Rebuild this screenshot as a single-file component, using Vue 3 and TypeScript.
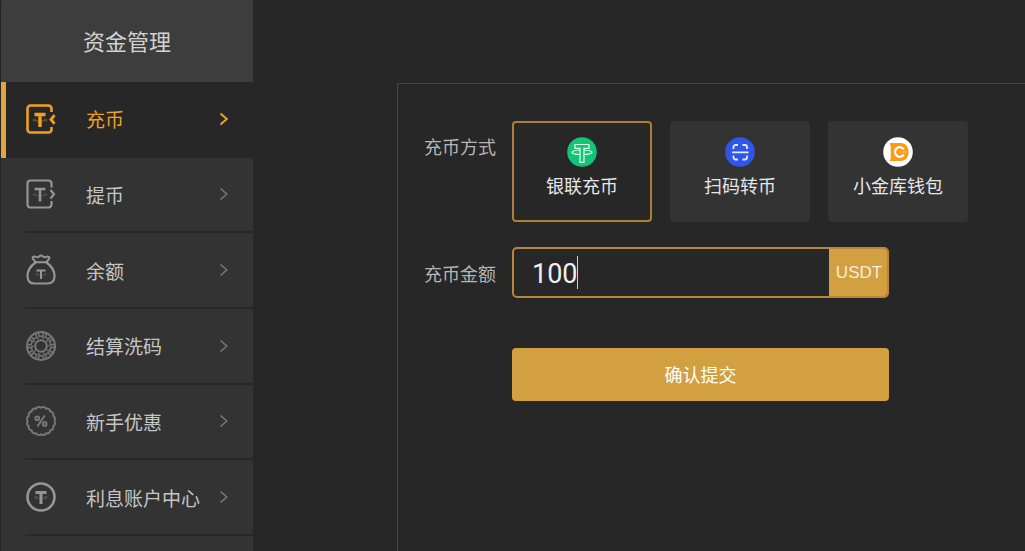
<script setup lang="ts">
import { ref } from 'vue'

type IconName = 'deposit' | 'withdraw' | 'balance' | 'chip' | 'offer' | 'interest'

interface MenuItem {
  icon: IconName
  label: string
}

const menu: MenuItem[] = [
  { icon: 'deposit', label: '充币' },
  { icon: 'withdraw', label: '提币' },
  { icon: 'balance', label: '余额' },
  { icon: 'chip', label: '结算洗码' },
  { icon: 'offer', label: '新手优惠' },
  { icon: 'interest', label: '利息账户中心' },
]

const methods = [
  { id: 'union', label: '银联充币' },
  { id: 'scan', label: '扫码转币' },
  { id: 'wallet', label: '小金库钱包' },
]

const activeMenu = ref<IconName>('deposit')
const method = ref('union')
const amount = ref('100')

// Scalloped outline of the discount badge: small outward arcs on a circle.
const scallops = 16
const badgePath = Array.from({ length: scallops + 1 }, (_, i) => {
  const a = (i / scallops) * Math.PI * 2
  const x = (16 + 13.3 * Math.cos(a)).toFixed(2)
  const y = (16 + 13.3 * Math.sin(a)).toFixed(2)
  return i === 0 ? `M${x} ${y}` : `A3.4 3.4 0 0 1 ${x} ${y}`
}).join('')

const chipAngles = Array.from({ length: 10 }, (_, i) => i * 36)
</script>

<template>
  <div class="page">
    <aside class="sidebar">
      <h1 class="title">资金管理</h1>
      <nav class="menu">
        <a
          v-for="item in menu"
          :key="item.icon"
          href="#"
          class="item"
          :class="[item.icon, { active: item.icon === activeMenu }]"
          @click.prevent="activeMenu = item.icon"
        >
          <span class="row">
            <svg class="icon" viewBox="0 0 32 32" fill="none" stroke="currentColor" stroke-width="2" aria-hidden="true">
              <g v-if="item.icon === 'deposit'">
                <path d="M26.500 9V5.500a3 3 0 0 0-3-3H5.500a3 3 0 0 0-3 3v21a3 3 0 0 0 3 3h18a3 3 0 0 0 3-3V24" stroke-width="2.600" />
                <path d="M29.500 12.200L26 16.500l3.500 4.300" stroke-width="2.800" />
                <path d="M9.500 11.500h11M15 11.500V24" stroke-width="3.400" />
                <path d="M11 16c-4.500.8-4.500 2 4 2s8.500-1.200 4-2" stroke-width="0.800" stroke-opacity="0.550" />
              </g>
              <g v-else-if="item.icon === 'withdraw'">
                <path d="M26.500 9.500V5.500a3 3 0 0 0-3-3H5.500a3 3 0 0 0-3 3v21a3 3 0 0 0 3 3h18a3 3 0 0 0 3-3V23" stroke-width="2.200" />
                <path d="M25.500 12l3.500 4.300-3.500 4.300" stroke-width="2.200" />
                <path d="M9.500 11h11M15 11v12.500" stroke-width="2.600" />
                <path d="M11 15.500c-4.500.8-4.500 2 4 2s8.500-1.200 4-2" stroke-width="0.700" stroke-opacity="0.500" />
              </g>
              <g v-else-if="item.icon === 'balance'">
                <path d="M10.500 8.200L7.800 4.600c-.9-1.600 1-2.600 3-1.700 1.500.6 2.600.2 3.600-.7 1-.8 2.200-.8 3.200 0s2.100 1.300 3.600.7c2-.9 3.900.1 3 1.700l-2.700 3.600z" />
                <path d="M10.500 8.500C5.500 12 2.500 16.500 2.500 22c0 5 2.500 7.500 7 7.500h13c4.500 0 7-2.500 7-7.500 0-5.500-3-10-8-13.500" stroke-width="2.200" />
                <path d="M11.500 16.500h9M16 16.500V25" />
                <path d="M13 19.500c-4 .6-3 1.600 3 1.600s7-1 3-1.600" stroke-width="0.600" stroke-opacity="0.500" />
              </g>
              <g v-else-if="item.icon === 'chip'">
                <circle cx="16" cy="16" r="14" stroke-width="2" />
                <circle cx="16" cy="16" r="5.800" stroke-width="2" />
                <path
                  v-for="angle in chipAngles"
                  :key="angle"
                  :transform="`rotate(${angle} 16 16)`"
                  d="M13.300 2.500l.8 3.800h3.800l.8-3.800M12.500 7.300l1 1.700"
                  stroke-width="1.500"
                />
              </g>
              <g v-else-if="item.icon === 'offer'">
                <path :d="badgePath" stroke-width="2" />
                <path d="M19.800 10.500l-7.400 11" stroke-width="2" />
                <circle cx="12.300" cy="13.300" r="1.900" stroke-width="2" />
                <circle cx="19.700" cy="18.900" r="1.900" stroke-width="2" />
              </g>
              <g v-else>
                <circle cx="16" cy="16" r="13.500" stroke-width="2.600" />
                <path d="M10.500 11.500h11M16 11.500V23" stroke-width="3" />
                <path d="M12.500 15.500c-4.500.8-3.500 2 3.500 2s8-1.200 3.500-2" stroke-width="0.800" stroke-opacity="0.600" />
              </g>
            </svg>
            <span class="label">{{ item.label }}</span>
            <svg class="arrow" viewBox="0 0 10 14" fill="none" stroke="currentColor" aria-hidden="true">
              <path d="M1.500 1.500L7.800 7l-6.300 5.500" />
            </svg>
          </span>
        </a>
      </nav>
    </aside>

    <main class="content">
      <form class="panel" @submit.prevent>
        <div class="field">
          <span id="method-label" class="caption top">充币方式</span>
          <div class="methods" role="group" aria-labelledby="method-label">
            <button
              v-for="m in methods"
              :key="m.id"
              type="button"
              class="method"
              :class="{ selected: m.id === method }"
              :aria-pressed="m.id === method"
              @click="method = m.id"
            >
              <svg class="logo" viewBox="0 0 30 30" fill="none" aria-hidden="true">
                <g v-if="m.id === 'union'">
                  <circle cx="15" cy="15" r="14.800" fill="#13c476" />
                  <path d="M8 7.500h14v3.800h-5v14h-4v-14H8z" stroke="#dcfff0" stroke-width="1.200" />
                  <path d="M12.800 13c-4.800.3-7.800 1.200-7.800 2.300s4 2.200 8 2.200M17.200 13c4.800.3 7.800 1.200 7.800 2.300s-4 2.200-8 2.200" stroke="#dcfff0" stroke-width="1.200" />
                </g>
                <g v-else-if="m.id === 'scan'">
                  <circle cx="15" cy="15" r="14.800" fill="#2f56e8" />
                  <path d="M8.500 12V10a2 2 0 0 1 2-2h2.500M17.500 8H20a2 2 0 0 1 2 2v2M22 18.500v2a2 2 0 0 1-2 2h-2.500M13 22.500h-2.500a2 2 0 0 1-2-2v-2M7 15.300h16.500" stroke="#e6ecff" stroke-width="1.800" />
                </g>
                <g v-else>
                  <circle cx="15" cy="15" r="14.800" fill="#fff" />
                  <path d="M6.500 6H18c4.500 0 7.500 3.600 7.500 9s-3 9-7.500 9H6.500l1.200-2.500v-13z" fill="#fb9a14" />
                  <path d="M20.800 12.300a4.800 4.800 0 1 0 0 5.400" stroke="#fff" stroke-width="2.200" />
                  <path d="M16 15h7" stroke="#fff" stroke-width="0.800" stroke-opacity="0.600" />
                </g>
              </svg>
              <span>{{ m.label }}</span>
            </button>
          </div>
        </div>

        <div class="field amount">
          <label class="caption" for="amount">充币金额</label>
          <div class="input-group">
            <div class="entry">
              <input id="amount" v-model="amount" type="text" inputmode="decimal" autocomplete="off" />
              <span class="caret"></span>
            </div>
            <span class="unit">USDT</span>
          </div>
        </div>

        <button type="submit" class="submit">确认提交</button>
      </form>
    </main>
  </div>
</template>

<style>
body {
  margin: 0;
  background: #272727;
}
</style>

<style scoped>
.page {
  display: flex;
  min-height: 100vh;
  color: #c6c6c6;
  background: #272727;
  font-family: "Noto Sans CJK SC", sans-serif;
}

.page * {
  box-sizing: border-box;
}

button,
input {
  margin: 0;
  font-family: inherit;
}

.sidebar {
  flex: 0 0 253px;
  border-left: 1px solid #242424;
  background: #333;
}

.title {
  margin: 0;
  padding-bottom: 1px;
  border-radius: 4px 0 0 0;
  background: #3d3d3d;
  color: #d2d2d2;
  font-size: 22px;
  font-weight: 400;
  line-height: 81px;
  text-align: center;
}

.menu {
  display: grid;
  grid-template-rows: repeat(6, 1fr);
  min-height: 454px;
}

.item {
  display: flex;
  padding-left: 24px;
  color: #c6c6c6;
  font-size: 19px;
  text-decoration: none;
}

.row {
  display: flex;
  flex: 1;
  align-items: center;
  padding-right: 24px;
  border-bottom: 2px solid #282828;
}

.item.active {
  padding-left: 19px;
  border-left: 5px solid #e3a53c;
  background: #272727;
  color: #f0a11f;
}

.icon {
  width: 32px;
  height: 32px;
  margin-right: 29px;
  color: #969696;
}

.chip .icon,
.offer .icon {
  color: #777;
}

.label {
  flex: 1;
}

.arrow {
  width: 10px;
  height: 14px;
  color: #7a7a7a;
  stroke-width: 1.5;
}

.active .icon,
.active .arrow {
  color: #f0a11f;
}

.active .arrow {
  stroke-width: 2;
}

.content {
  display: flex;
  flex: 1;
  min-width: 0;
  padding: 83px 0 0 144px;
}

.panel {
  flex: 1;
  padding: 37px 0 40px 26px;
  border-top: 1px solid #464646;
  border-left: 1px solid #464646;
}

.field {
  display: flex;
  align-items: center;
}

.caption {
  flex: 0 0 88px;
  color: #b5b5b5;
  font-size: 18px;
  line-height: 50px;
}

.caption.top {
  align-self: flex-start;
}

.methods {
  display: flex;
  gap: 18px;
}

.method {
  display: flex;
  flex-direction: column;
  align-items: center;
  width: 140px;
  padding: 14px 0 16px;
  border: 2px solid #333;
  border-radius: 4px;
  background: #333;
  color: #e6e6e6;
  font-size: 18px;
  line-height: 37px;
}

.method.selected {
  border-color: #ad7f35;
  background: transparent;
}

.logo {
  width: 30px;
  height: 30px;
}

.amount {
  margin-top: 25px;
}

.input-group {
  display: flex;
  width: 377px;
  height: 51px;
  overflow: hidden;
  border: 2px solid #b98836;
  border-radius: 5px;
  background: #272727;
}

.entry {
  position: relative;
  flex: 1;
}

.entry input {
  width: 100%;
  height: 100%;
  padding: 2px 18px 0;
  border: 0;
  outline: 0;
  background: transparent;
  color: #efefef;
  font-family: Roboto, sans-serif;
  font-size: 27px;
}

.caret {
  position: absolute;
  top: 7px;
  left: 63px;
  width: 1px;
  height: 33px;
  background: #d0d0d0;
}

.unit {
  width: 60px;
  margin: -2px;
  background: #d3a041;
  color: #f5eedf;
  font-family: "Liberation Sans", sans-serif;
  font-size: 17px;
  line-height: 51px;
  text-align: center;
}

.submit {
  display: block;
  width: 377px;
  margin: 50px 0 0 88px;
  padding: 0;
  border: 0;
  border-radius: 4px;
  background: #d3a041;
  color: #fff;
  font-size: 18px;
  line-height: 53px;
}
</style>
